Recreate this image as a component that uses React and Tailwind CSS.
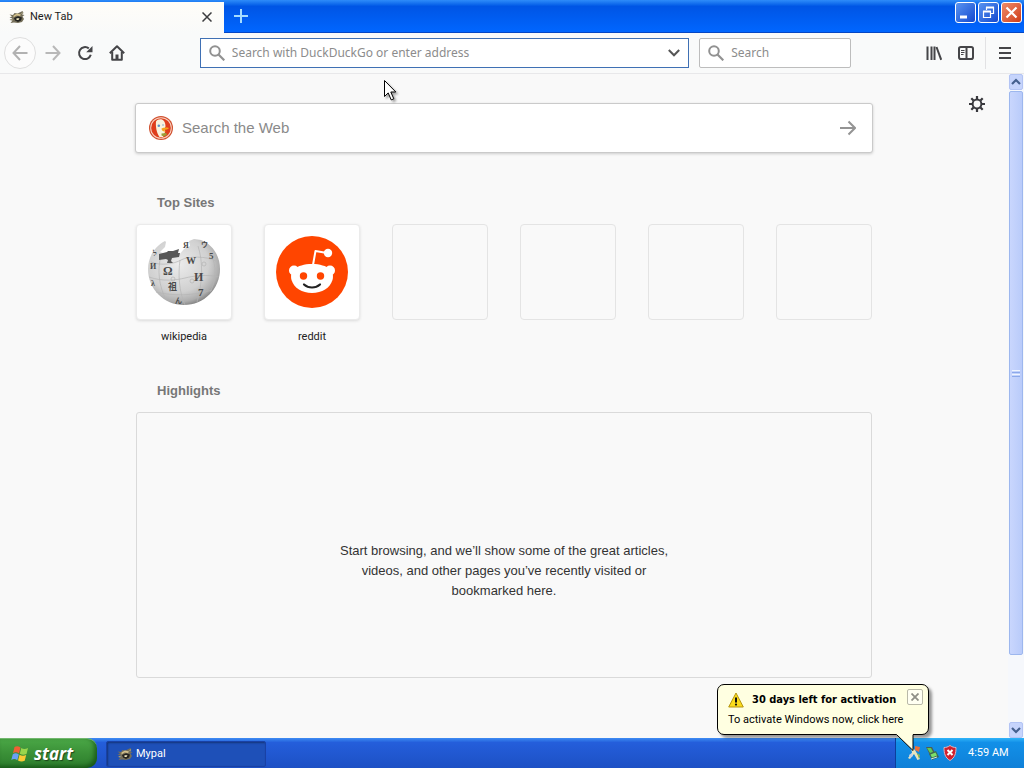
import React from "react";

const UI = "font-['Roboto','Noto_Sans',sans-serif]";
const FIELD = "font-['Noto_Sans',sans-serif]";
const BODY = "font-['Liberation_Sans',sans-serif]";

function BirdIcon({ className }) {
  return (
    <svg viewBox="0 0 16 16" className={className} aria-hidden="true">
      <path d="M.5 5.500 4 6l1.500-2 3 .5L13.500 2l1 2-1.500 1.500 2.500.5-2 1.500 1.500 2.500-2 3-4 1-4-.5-3.500.5 2-2.500-3-.5 3-1.500L.5 8.500l2.500-1z" fill="#756f5a" />
      <path d="M4.500 6.500 8 4.500l4 1-1 1.500-3.500-.5-3 2z" fill="#d3c08a" />
      <path d="M5 9l4-1.800L13 8.500l-1 3-3 1.500-3-1.500z" fill="#24231f" />
      <path d="M7.500 9.200h3l-1 1.800H7.500z" fill="#f0e8c0" />
      <path d="M12 4.500l2-1.500-.5 2.500zM1.500 10l3 .5-2 1z" fill="#a9a284" />
    </svg>
  );
}

function Magnifier() {
  return (
    <svg viewBox="0 0 16 16" className="size-4 shrink-0" fill="none" stroke="#919191" strokeWidth="2" aria-hidden="true">
      <circle cx="6" cy="6" r="4.8" />
      <path d="M9.5 9.5 15.3 15.3" strokeWidth="2.2" />
    </svg>
  );
}

function DuckLogo() {
  return (
    <svg viewBox="0 0 24 24" className="size-6 shrink-0" aria-hidden="true">
      <circle cx="12" cy="12" r="12" fill="#d0502f" />
      <circle cx="12" cy="12" r="10.8" fill="#f8d5c5" />
      <circle cx="12" cy="12" r="9.8" fill="#df3e1c" />
      <path d="M7 5.500c1.500-2.500 5.500-3 7.500-1 1.500 1.500 2 3.500 2 6l-1 2.500 .5 3-2 5-3.500 0C7.500 17 6.500 10 7 5.500z" fill="#f8f2dc" />
      <circle cx="9.800" cy="9.800" r="1.300" fill="#5c93c8" />
      <circle cx="14" cy="9" r=".8" fill="#7ba5c4" />
      <path d="M12.500 12.500c2-1 5-1.200 7.500-.5-1 1.500-3.500 1.800-5 1.900l2 1.300c-2 .6-4.500 0-4.500-2.700z" fill="#f7a21b" />
      <path d="M12.500 17.500l4.500-.5 1 1.500-3 2-2.500-1z" fill="#9a9e36" />
    </svg>
  );
}

function Globe() {
  return (
    <svg viewBox="0 0 72 68" className="h-[68px] w-[72px]" aria-hidden="true">
      <defs>
        <radialGradient id="globe" cx="42%" cy="38%" r="65%">
          <stop offset="0" stopColor="#ececec" />
          <stop offset="0.65" stopColor="#d0d0d0" />
          <stop offset="0.88" stopColor="#adadad" />
          <stop offset="1" stopColor="#7d7d7d" />
        </radialGradient>
      </defs>
      <path d="M17 3C7 8 0 19 0 31c0 20 16 36 36 36s36-16 36-36C72 17 64 6 53 2l-7-1-5 2 1 5-6 3-5 6-4 0-3-4-6 3-6-2 5-5 1-5z" fill="url(#globe)" />
      <g fill="none" stroke="#b4b4b4" strokeWidth="0.7">
        <path d="M13 18c-4 14-2 30 5 44M32 22c-2 14-1 32 5 45M50 8c5 15 5 36-1 56M63 16c6 12 5 28-1 38" />
        <path d="M3 24c10 4 23 2 30-2s26-4 35 1M1 39c14 5 28 3 36 1s22-4 34-1M8 54c16 4 38 4 56-2" />
        <circle cx="25" cy="41" r="2" /><circle cx="44" cy="43" r="2" /><circle cx="56" cy="26" r="2" />
      </g>
      <path d="M11 16l8-2 1-1 5 0 6-2-1 4 2 0-1 4-7 1-1 3 2 2-6 0 1-3-2-1-7 1z" fill="#585858" />
      <g fill="#4a4a4a" fontFamily="Liberation Serif, Noto Sans CJK SC, serif" fontWeight="bold">
        <text x="15" y="37" fontSize="12">Ω</text>
        <text x="38" y="26" fontSize="10">W</text>
        <text x="46" y="43" fontSize="12">И</text>
        <text x="20" y="52" fontSize="9">祖</text>
        <text x="50" y="58" fontSize="11">7</text>
        <text x="61" y="21" fontSize="9">5</text>
        <text x="2" y="31" fontSize="8">И</text>
        <text x="5" y="18" fontSize="8">ל</text>
        <text x="35" y="10" fontSize="8">Я</text>
        <text x="53" y="9" fontSize="7">ウ</text>
        <text x="27" y="65" fontSize="7">ん</text>
        <text x="3" y="48" fontSize="8">λ</text>
      </g>
    </svg>
  );
}

function RedditLogo() {
  return (
    <svg viewBox="0 0 72 72" className="size-[72px]" aria-hidden="true">
      <circle cx="36" cy="36" r="36" fill="#ff4500" />
      <path d="M37 29l2.500-14L51 17" fill="none" stroke="#fff" strokeWidth="2" strokeLinejoin="round" />
      <circle cx="52" cy="17" r="4.200" fill="#fff" />
      <circle cx="18" cy="34.500" r="5" fill="#fff" />
      <circle cx="54" cy="34.500" r="5" fill="#fff" />
      <path d="M36 28c8 0 14 2 18 5 3 3 3.500 7 2.500 11C54 52 46 57 36 57s-18-5-20.500-13c-1-4-.5-8 2.500-11 4-3 10-5 18-5z" fill="#fff" />
      <circle cx="27.500" cy="40" r="3.700" fill="#ff4500" />
      <circle cx="44.500" cy="40" r="3.700" fill="#ff4500" />
      <path d="M28 48.500c4.500 4 11.500 4 16 0" fill="none" stroke="#222" strokeWidth="2.200" strokeLinecap="round" />
    </svg>
  );
}

function ToolButton({ label, children, className = "" }) {
  return (
    <button aria-label={label} className={`flex size-8 shrink-0 items-center justify-center ${className}`}>
      <svg viewBox="0 0 16 16" className="size-4" fill="none" stroke="#454548" strokeWidth="2" aria-hidden="true">
        {children}
      </svg>
    </button>
  );
}

function WindowButton({ label, className, children }) {
  return (
    <button aria-label={label} className={`flex size-[21px] items-center justify-center rounded-[3px] border border-white ${className}`}>
      <svg viewBox="0 0 19 19" className="size-[19px]" fill="none" stroke="#fff" strokeWidth="2" aria-hidden="true">
        {children}
      </svg>
    </button>
  );
}

function TitleBar() {
  return (
    <header className="flex h-[33px] items-stretch border-b border-[#0546c4] bg-linear-to-b from-[#2e8cf9] via-[#0055e5] via-20% to-[#0066ff]">
      <div className="mt-0.5 -mb-px flex w-[224px] items-center bg-linear-to-b from-[#fffdf8] to-[#f9fafa] pr-[9px] pb-px pl-[9px]">
        <BirdIcon className="size-4" />
        <span className={`ml-[5px] flex-1 text-[11px] leading-4 text-[#1c1c1c] ${UI}`}>New Tab</span>
        <button aria-label="Close tab" className="flex size-4 items-center justify-center">
          <svg viewBox="0 0 10 10" className="size-2.5" fill="none" stroke="#3c3c3f" strokeWidth="1.500"><path d="M.5.5l9 9M9.500.5l-9 9" /></svg>
        </button>
      </div>
      <button aria-label="Open a new tab" className="flex w-[34px] items-center justify-center">
        <svg viewBox="0 0 14 14" className="size-3.5" fill="none" stroke="#a5dcff" strokeWidth="2"><path d="M7 0v14M0 7h14" /></svg>
      </button>
      <div className="flex flex-1 justify-end gap-0.5 pt-0.5 pr-0.5">
        <WindowButton label="Minimize" className="bg-linear-to-br from-[#5a93f0] to-[#1547cf]">
          <path d="M4 14h7" strokeWidth="3" />
        </WindowButton>
        <WindowButton label="Restore" className="bg-linear-to-br from-[#5a93f0] to-[#1547cf]">
          <path d="M7.500 7V4.500H14.500V10.500H12" strokeWidth="1.200" />
          <path d="M7 4.500h8" />
          <path d="M4.500 8.500h7V14.500h-7z" strokeWidth="1.200" />
          <path d="M4 8.500h8" />
        </WindowButton>
        <WindowButton label="Close" className="bg-linear-to-br from-[#ee8a68] to-[#cf3a12]">
          <path d="M4.500 4.500l10 10M14.500 4.500l-10 10" strokeWidth="2.200" />
        </WindowButton>
      </div>
    </header>
  );
}

function Toolbar() {
  return (
    <nav className="flex h-[41px] items-center border-b border-[#e8e8ea] bg-[#f9fafa] pr-[3px] pl-1">
      <ToolButton label="Back" className="mr-px rounded-full border border-[#dfdfdf] bg-[#fcfcfc]">
        <path d="M15.500 8H1.500M8 1 1.500 8 8 15" stroke="#b2b2b2" />
      </ToolButton>
      <ToolButton label="Forward">
        <path d="M.5 8h14M8 1l6.500 7L8 15" stroke="#b8b8b8" />
      </ToolButton>
      <ToolButton label="Reload">
        <path d="M13.800 9.800A6 6 0 1 1 11.800 3.400" />
        <path d="M15.500 1v6.300H9.200z" fill="#454548" stroke="none" />
      </ToolButton>
      <ToolButton label="Home">
        <path d="M.8 8.300 8 1.300l7.200 7" strokeLinejoin="round" />
        <path d="M3.200 7v7.800h9.600V7" strokeLinejoin="round" />
        <path d="M6.500 15V9.500h3V15z" fill="#454548" stroke="none" />
      </ToolButton>
      <div className="flex-[69]" />
      <div className="flex h-[30px] flex-[489] items-center border border-[#3f70b4] bg-white pr-1.5 pl-2">
        <Magnifier />
        <input
          aria-label="Address"
          placeholder="Search with DuckDuckGo or enter address"
          className={`ml-[7px] min-w-0 flex-1 bg-transparent text-[12px] outline-none placeholder:text-[#8c8c8c] ${FIELD}`}
        />
        <button aria-label="Show history" className="flex size-4 items-center justify-center">
          <svg viewBox="0 0 12 8" className="h-2 w-3" fill="none" stroke="#555" strokeWidth="2"><path d="M.8 1 6 6.300 11.200 1" /></svg>
        </button>
      </div>
      <div className="ml-2.5 flex h-[30px] w-[152px] items-center rounded-[2px] border border-[#bdbdbd] bg-white px-2">
        <Magnifier />
        <input
          aria-label="Search"
          placeholder="Search"
          className={`ml-[7px] min-w-0 flex-1 bg-transparent text-[12px] outline-none placeholder:text-[#8c8c8c] ${FIELD}`}
        />
      </div>
      <div className="flex-[69]" />
      <ToolButton label="Library">
        <path d="M1.500 1.500V15M5.500 1.500V15M8.500 1.500V15" strokeWidth="2" />
        <path d="M10.500 2 15.200 14.800" strokeWidth="2" />
      </ToolButton>
      <ToolButton label="Sidebars">
        <rect x="1" y="2" width="14" height="12" rx="1.800" />
        <path d="M8.500 2v12" />
        <path d="M3 5.500h3.500M3 7.500h3.500M3 9.500h2.500" strokeWidth="1" />
      </ToolButton>
      <div className="mx-[3px] h-8 w-px bg-[#e2e2e4]" />
      <ToolButton label="Menu">
        <path d="M2 3h12M2 8h12M2 13h12" />
      </ToolButton>
    </nav>
  );
}

function SiteTile({ name, children }) {
  return (
    <a href="#" className="flex flex-col items-center">
      <span className="flex size-24 items-center justify-center rounded border border-[#ebebeb] bg-white shadow-[0_1px_3px_rgba(0,0,0,0.12)]">
        {children}
      </span>
      <span className={`mt-[9px] text-[11px] leading-4 text-[#222] ${UI}`}>{name}</span>
    </a>
  );
}

function NewTabPage() {
  return (
    <main className={`flex-1 bg-[#f9f9f9] ${BODY}`}>
      <div className="mx-auto w-full max-w-[738px] pt-[29px]">
        <form className="flex h-[50px] items-center rounded-[3px] border border-[#cacaca] bg-white pr-4 pl-[13px] shadow-[0_1px_3px_rgba(0,0,0,0.18)]">
          <DuckLogo />
          <input
            aria-label="Search the Web"
            placeholder="Search the Web"
            className="ml-[9px] min-w-0 flex-1 bg-transparent text-[15px] outline-none placeholder:text-[#8a8a8a]"
          />
          <button type="button" aria-label="Submit search">
            <svg viewBox="0 0 16 16" className="size-4" fill="none" stroke="#949494" strokeWidth="2"><path d="M0 8h15M8.500 1.500 15 8l-6.500 6.500" /></svg>
          </button>
        </form>
        <div className="px-px">
          <h2 className="mt-10 ml-[21px] text-[13px] leading-5 font-bold text-[#777]">Top Sites</h2>
          <div className="mt-[11px] grid grid-cols-6 gap-8">
            <SiteTile name="wikipedia"><Globe /></SiteTile>
            <SiteTile name="reddit"><RedditLogo /></SiteTile>
            {[0, 1, 2, 3].map((slot) => (
              <div key={slot} className="size-24 rounded border border-[#e4e4e4]" />
            ))}
          </div>
          <h2 className="mt-9 ml-[21px] text-[13px] leading-5 font-bold text-[#777]">Highlights</h2>
          <section className="mt-[11px] flex h-[266px] items-center justify-center rounded-[3px] border border-[#dadada] pt-[52px]">
            <p className="max-w-[344px] text-center text-[13px] leading-5 text-[#333]">
              Start browsing, and we’ll show some of the great articles, videos, and other pages you’ve recently visited or bookmarked here.
            </p>
          </section>
        </div>
      </div>
    </main>
  );
}

function Preferences() {
  return (
    <button aria-label="Customize page" className="absolute top-[22px] right-[23px]">
      <svg viewBox="0 0 16 16" className="size-4" fill="none" stroke="#38383d" aria-hidden="true">
        <circle cx="8" cy="8" r="4.400" strokeWidth="2" />
        <path d="M8 0v3M8 13v3M0 8h3M13 8h3M2.300 2.300l2.200 2.200M11.500 11.500l2.200 2.200M13.700 2.300l-2.200 2.200M4.500 11.500l-2.200 2.200" strokeWidth="2.200" />
      </svg>
    </button>
  );
}

function ScrollArrow({ label, d }) {
  return (
    <button aria-label={label} className="flex h-4 items-center justify-center rounded-[2px] border border-[#b3c4f4] bg-[#c6d4fc]">
      <svg viewBox="0 0 10 8" className="h-2 w-2.5" fill="none" stroke="#45608f" strokeWidth="2.200"><path d={d} /></svg>
    </button>
  );
}

function ScrollBar() {
  return (
    <div className="flex w-4 shrink-0 flex-col gap-px bg-[#f6f8fc] px-px">
      <ScrollArrow label="Scroll up" d="M1 6 5 2l4 4" />
      <div className="flex flex-[565] flex-col items-center justify-center gap-px rounded-[2px] border border-[#9db7ee] bg-linear-to-r from-[#c9d6fd] to-[#b9cbfa]">
        <span className="h-px w-2 bg-[#eef4fe]" />
        <span className="h-px w-2 bg-[#8ca9ea]" />
        <span className="h-px w-2 bg-[#eef4fe]" />
        <span className="h-px w-2 bg-[#8ca9ea]" />
      </div>
      <div className="flex-[65]" />
      <ScrollArrow label="Scroll down" d="M1 2l4 4 4-4" />
    </div>
  );
}

function Flag() {
  return (
    <svg viewBox="0 0 18 18" className="size-[18px]" aria-hidden="true">
      <path d="M3.500 2c2-1.300 4-1 6 .5L8 8.500c-2-1.500-4-1.500-6-.3z" fill="#ef6035" />
      <path d="M10.300 3c2 1.200 4 1.200 6.700 0L15.500 9c-2.500 1.200-4.500 1-6.700-.3z" fill="#9ad54c" />
      <path d="M1.800 9.200c2-1.300 4-1.100 6 .2L6.300 15.200c-2-1.500-4-1.400-6-.3z" fill="#6aa0f5" />
      <path d="M8.500 9.800c2.200 1.200 4.200 1.300 6.700.2l-1.500 5.800c-2.500 1.100-4.500.9-6.700-.4z" fill="#fbc935" />
    </svg>
  );
}

function Balloon() {
  return (
    <aside className={`absolute right-[95px] bottom-[33px] w-[212px] rounded-[7px] border border-black bg-[#ffffe1] pr-[5px] pl-2.5 text-black shadow-[3px_3px_3px_rgba(0,0,0,0.4)] ${UI}`}>
      <div className="flex items-start pt-1">
        <svg viewBox="0 0 16 16" className="mt-[3px] size-4 shrink-0" aria-hidden="true">
          <path d="M8 1 15.300 15H.7z" fill="#fbdc1c" stroke="#b59410" strokeWidth="1" strokeLinejoin="round" />
          <path d="M8 5.500v5" stroke="#111" strokeWidth="2" />
          <circle cx="8" cy="12.600" r="1.100" fill="#111" />
        </svg>
        <strong className="ml-2 flex-1 pt-[3px] text-[11px] leading-4 font-bold whitespace-nowrap font-['DejaVu_Sans_Condensed','DejaVu_Sans',sans-serif]">30 days left for activation</strong>
        <button aria-label="Dismiss" className="flex size-4 shrink-0 items-center justify-center rounded-[2px] border border-[#b9b9a8] bg-[#fffff2]">
          <svg viewBox="0 0 8 8" className="size-2" fill="none" stroke="#8f8f86" strokeWidth="1.800"><path d="M.5.5l7 7M7.500.5l-7 7" /></svg>
        </button>
      </div>
      <p className="pt-1 pb-1.5 text-[11px] leading-4 whitespace-nowrap">To activate Windows now, click here</p>
      <svg viewBox="0 0 20 18" className="absolute top-full right-3 h-[18px] w-5" aria-hidden="true">
        <path d="M.5-1v1.500L17 16.500V-1z" fill="#ffffe1" />
        <path d="M.5.5 17 16.500V.5" fill="none" stroke="#000" />
        <path d="M1 0h15.500" stroke="#ffffe1" strokeWidth="2" />
      </svg>
    </aside>
  );
}

function Taskbar() {
  return (
    <footer className={`flex h-[30px] items-stretch bg-linear-to-b from-[#3f8cf3] via-[#245edb] via-15% to-[#1d50c4] text-white ${UI}`}>
      <button className="flex w-[97px] items-center rounded-r-[10px] border-t border-[#71b66d] bg-linear-to-b from-[#4aa746] via-[#3a9037] to-[#2c7d2c] pl-[11px] shadow-[inset_-3px_-2px_4px_rgba(0,50,0,0.5)]">
        <Flag />
        <span className="ml-[5px] text-[17px] leading-5 font-bold italic font-['Open_Sans',sans-serif] text-shadow-[1px_1px_1px_rgba(0,0,0,0.5)]">start</span>
      </button>
      <button className="mt-[3px] mb-px ml-[9px] flex w-[160px] items-center rounded-[2px] border border-[#1941a5] bg-[#1e50b8] pl-2.5 text-[11px] shadow-[inset_1px_1px_2px_rgba(0,0,0,0.35)]">
        <BirdIcon className="size-4" />
        <span className="ml-[3px]">Mypal</span>
      </button>
      <div className="flex-1" />
      <div className="relative flex w-[129px] items-center border-l border-[#0c3f9c] bg-linear-to-b from-[#2fb4f8] via-[#1290e8] via-15% to-[#0f80d8] pl-2.5">
        <svg viewBox="0 0 16 16" className="size-4" aria-hidden="true">
          <path d="M5 2l4 3 5 9-2.500 1-3.500-6-4 5-2-1 4-5z" fill="#e9e4bd" />
          <path d="M9 1l5 1-1 5-4-2z" fill="#e8703c" /><path d="M11 8l3 2-1 4z" fill="#8fb848" /><path d="M3 10l3-2 1 3-3 2z" fill="#c8d0e0" />
        </svg>
        <svg viewBox="0 0 16 16" className="ml-0.5 size-4" aria-hidden="true">
          <path d="M2 2l6 0 3 6-5 2z" fill="#4f5d53" /><path d="M3 3l4 0 2 4-3 1z" fill="#5fcb54" />
          <path d="M5 9l7-3 3 6-7 3z" fill="#3c6b53" /><path d="M6.500 9.500l5-2 1.500 3-5 2z" fill="#7ee06a" />
          <path d="M7 14l6-2" stroke="#d5e4da" />
        </svg>
        <svg viewBox="0 0 16 16" className="ml-0.5 size-4" aria-hidden="true">
          <path d="M8 .5c2 1.500 4 2 6 2 0 6-1 10-6 13-5-3-6-7-6-13 2 0 4-.5 6-2z" fill="#d0202e" stroke="#e5b4bd" />
          <path d="M5.500 5l5 5M10.500 5l-5 5" stroke="#fff" strokeWidth="2" />
        </svg>
        <time className="ml-2.5 text-[11px] whitespace-nowrap">4:59 AM</time>
        <Balloon />
      </div>
    </footer>
  );
}

function Pointer() {
  return (
    <svg viewBox="0 0 14 22" className="pointer-events-none absolute top-20 left-96 h-[22px] w-3.5 drop-shadow-[2px_2px_1px_rgba(0,0,0,0.35)]" aria-hidden="true">
      <path d="M.5.5v16l3.700-3.600 3 7 2.600-1.100-3-6.800h5z" fill="#fff" stroke="#000" />
    </svg>
  );
}

export default function App() {
  return (
    <div className="relative flex min-h-screen flex-col overflow-hidden bg-[#f9f9f9]">
      <TitleBar />
      <Toolbar />
      <div className="flex flex-1">
        <div className="relative flex flex-1">
          <NewTabPage />
          <Preferences />
        </div>
        <ScrollBar />
      </div>
      <Taskbar />
      <Pointer />
    </div>
  );
}
